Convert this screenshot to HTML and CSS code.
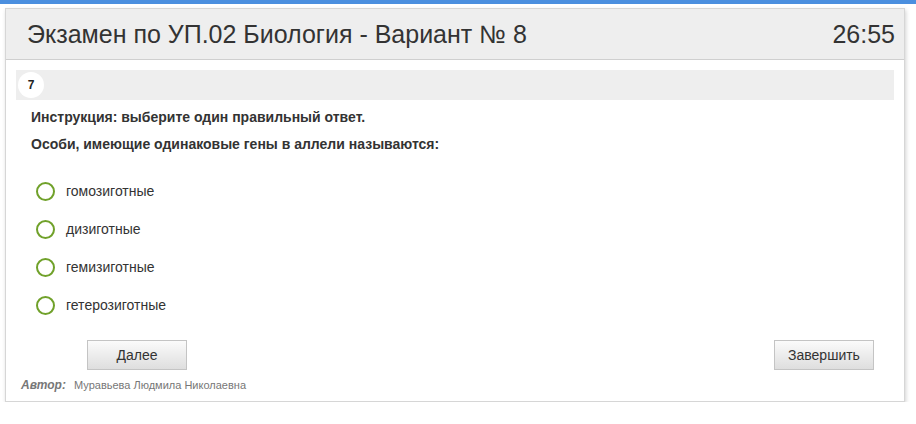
FILE: index.html
```html
<!DOCTYPE html>
<html lang="ru">

<head>
  <meta charset="UTF-8">
  <meta name="viewport" content="width=device-width, initial-scale=1.0">
  <title>Экзамен</title>
  <link rel="stylesheet" href="styles.css">
</head>

<body>
  <div class="top-line"></div>
  <div class="test-box">
    <div class="test-header">
      <h1>Экзамен по УП.02 Биология - Вариант № 8</h1>
      <div class="timer">26:55</div>
    </div>
    <div class="test-body">
      <div class="question-num"><span class="num">7</span></div>
      <p class="instruction">Инструкция: выберите один правильный ответ.</p>
      <p class="question">Особи, имеющие одинаковые гены в аллели называются:</p>
      <ul class="answers">
        <li><span class="radio"></span>гомозиготные</li>
        <li><span class="radio"></span>дизиготные</li>
        <li><span class="radio"></span>гемизиготные</li>
        <li><span class="radio"></span>гетерозиготные</li>
      </ul>
      <div class="buttons">
        <button class="btn btn-next">Далее</button>
        <button class="btn btn-finish">Завершить</button>
      </div>
      <div class="author"><b>Автор:</b> Муравьева Людмила Николаевна</div>
    </div>
  </div>
</body>

</html>
```

FILE: styles.css
```css
body,
html {
  margin: 0;
  background: #fff;
  font-family: "Liberation Sans", Arial, sans-serif;
  color: #333;
}

.top-line {
  height: 4px;
  background: #4b8fdf;
}

.test-box {
  margin: 4px 11px 0 5px;
  border: 1px solid #d6d6d6;
  box-shadow: 1px 2px 4px rgba(0, 0, 0, 0.18);
  background: #fff;
}

.test-header {
  display: flex;
  justify-content: space-between;
  align-items: center;
  height: 50px;
  padding: 0 9px 0 21px;
  background: #eeeeee;
  border-bottom: 1px solid #cfcfcf;
}

.test-header h1 {
  margin: 0;
  font-size: 25px;
  font-weight: normal;
  color: #333;
}

.timer {
  font-size: 25px;
  color: #333;
}

.test-body {
  padding: 10px 10px 9px 10px;
}

.question-num {
  display: flex;
  align-items: center;
  height: 30px;
  background: #eeeeee;
  padding-left: 2px;
}

.num {
  display: flex;
  align-items: center;
  justify-content: center;
  width: 26px;
  height: 26px;
  border-radius: 50%;
  background: #fff;
  font-size: 12px;
  font-weight: bold;
  color: #222;
}

.instruction,
.question {
  margin: 0;
  padding-left: 15px;
  font-size: 14px;
  font-weight: bold;
  color: #333;
}

.instruction {
  margin-top: 9px;
  line-height: 16px;
}

.question {
  margin-top: 11px;
  line-height: 16px;
}

.answers {
  list-style: none;
  margin: 20px 0 0 0;
  padding: 0 0 0 20px;
}

.answers li {
  display: flex;
  align-items: center;
  height: 38px;
  font-size: 14px;
  color: #333;
}

.radio {
  width: 15px;
  height: 15px;
  border: 2px solid #70a12a;
  border-radius: 50%;
  margin-right: 11px;
}

.buttons {
  display: flex;
  justify-content: space-between;
  margin-top: 16px;
  padding: 0 20px 0 71px;
}

.btn {
  width: 100px;
  height: 30px;
  border: 1px solid #c4c4c4;
  background: linear-gradient(#fbfbfb, #dedede);
  font-family: "Liberation Sans", Arial, sans-serif;
  font-size: 14px;
  color: #333;
}

.author {
  margin-top: 8px;
  padding-left: 5px;
  font-size: 11px;
  color: #777;
}

.author b {
  font-style: italic;
  font-size: 12px;
  margin-right: 5px;
}
```
